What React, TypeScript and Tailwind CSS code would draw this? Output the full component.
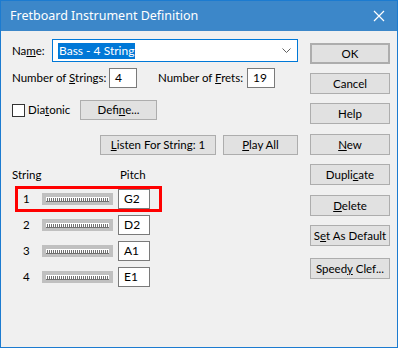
import React from 'react';

const font = { fontFamily: 'Lato, "Noto Sans", sans-serif' };

function Btn({ children, className = '' }: { children: React.ReactNode; className?: string }) {
  return (
    <div
      className={`flex items-center justify-center whitespace-nowrap border border-[#adadad] bg-[#e1e1e1] text-[11.5px] text-black ${className}`}
    >
      <span>{children}</span>
    </div>
  );
}

function Field({ value, className = '' }: { value: string; className?: string }) {
  return (
    <div className={`flex h-[20px] items-center border border-[#7a7a7a] bg-white pl-[5px] text-[12px] ${className}`}>
      {value}
    </div>
  );
}

// slider strip with the little tick comb
function Slider() {
  const ticks = Array.from({ length: 31 }, (_, i) => i * 2 + 1);
  return (
    <div className="flex h-[12px] w-[71px] items-center justify-center bg-[#c0c0c0]">
      <svg width="63" height="5" viewBox="0 0 63 5">
        <rect x="0" y="0" width="63" height="5" fill="#ffffff" />
        {ticks.map((x) => (
          <rect key={x} x={x} y="1" width="1" height="3" fill="#707070" />
        ))}
        <rect x="0" y="4" width="63" height="1" fill="#707070" />
      </svg>
    </div>
  );
}

const strings = [
  { n: '1', pitch: 'G2', hl: true },
  { n: '2', pitch: 'D2' },
  { n: '3', pitch: 'A1' },
  { n: '4', pitch: 'E1' },
];

export default function App() {
  return (
    <div
      className="h-[348px] w-[398px] whitespace-nowrap border border-[#1c7bd0] bg-[#f0f0f0] text-black"
      style={font}
    >
      {/* Title bar */}
      <div className="flex h-[30px] items-center justify-between bg-[#3c87c9] pl-[9px] pr-[12px] text-white">
        <span className="text-[12.5px]" style={{ fontFamily: '"Noto Sans", sans-serif' }}>
          Fretboard Instrument Definition
        </span>
        <svg width="12" height="12" viewBox="0 0 12 12">
          <path d="M1 1L11 11M11 1L1 11" stroke="#ffffff" strokeWidth="1.2" />
        </svg>
      </div>

      <div className="flex">
        {/* Left pane */}
        <div className="flex-1 pl-[11px] pr-[12px] text-[11.5px]">
          {/* Name */}
          <div className="mt-[8px] flex h-[23px] items-center">
            <span className="w-[40px]">
              Na<u>m</u>e:
            </span>
            <div className="flex h-[23px] flex-1 items-center justify-between border border-[#0078d7] bg-white pl-[5px] pr-[6px]">
              <span className="bg-[#0078d7] px-px text-[12px] leading-[16px] text-white">Bass - 4 String</span>
              <svg width="9" height="5" viewBox="0 0 9 5">
                <path d="M0.5 0.5L4.5 4.5L8.5 0.5" stroke="#606060" fill="none" />
              </svg>
            </div>
          </div>

          {/* Strings / frets */}
          <div className="mt-[6px] flex h-[20px] items-center">
            <span className="w-[97px]">
              Number of <u>S</u>trings:
            </span>
            <Field value="4" className="w-[28px]" />
            <span className="ml-[21px] w-[89px]">
              Number of <u>F</u>rets:
            </span>
            <Field value="19" className="w-[28px]" />
          </div>

          {/* Diatonic */}
          <div className="mt-[12px] flex h-[20px] items-center">
            <div className="h-[13px] w-[13px] border border-[#333333] bg-white" />
            <span className="ml-[3px] w-[52px]">
              Dia<u>t</u>onic
            </span>
            <Btn className="h-[20px] w-[77px]">
              Defi<u>n</u>e...
            </Btn>
          </div>

          {/* Listen / play */}
          <div className="mt-[15px] flex h-[20px] items-center">
            <Btn className="ml-[88px] h-[20px] w-[116px]">
              <u>L</u>isten For String: 1
            </Btn>
            <Btn className="ml-[7px] h-[20px] w-[75px]">
              <u>P</u>lay All
            </Btn>
          </div>

          {/* String list */}
          <div className="mt-[12px] flex h-[16px] items-center">
            <span className="w-[108px]">String</span>
            <span>Pitch</span>
          </div>
          <div className="mt-[3px] flex flex-col">
            {strings.map((s) => (
              <div
                key={s.n}
                className={`ml-[3px] flex h-[26px] w-[147px] items-center border-[3px] ${
                  s.hl ? 'border-[#ff0000]' : 'border-transparent'
                }`}
              >
                <span className="w-[24px] pl-[5px]">{s.n}</span>
                <Slider />
                <Field value={s.pitch} className="ml-[5px] w-[32px]" />
              </div>
            ))}
          </div>
        </div>

        {/* Right buttons */}
        <div className="mr-[7px] flex w-[80px] flex-col">
          <Btn className="mt-[12px] h-[21px] border-2 border-[#0078d7]">OK</Btn>
          <Btn className="mt-[9px] h-[21px]">Cancel</Btn>
          <Btn className="mt-[9px] h-[21px]">Help</Btn>
          <Btn className="mt-[10px] h-[21px]">
            <u>N</u>ew
          </Btn>
          <Btn className="mt-[9px] h-[21px]">
            Dupli<u>c</u>ate
          </Btn>
          <Btn className="mt-[10px] h-[21px]">
            <u>D</u>elete
          </Btn>
          <Btn className="mt-[9px] h-[21px]">
            S<u>e</u>t As Default
          </Btn>
          <Btn className="mt-[12px] h-[21px]">
            Speed<u>y</u> Clef...
          </Btn>
        </div>
      </div>
    </div>
  );
}
